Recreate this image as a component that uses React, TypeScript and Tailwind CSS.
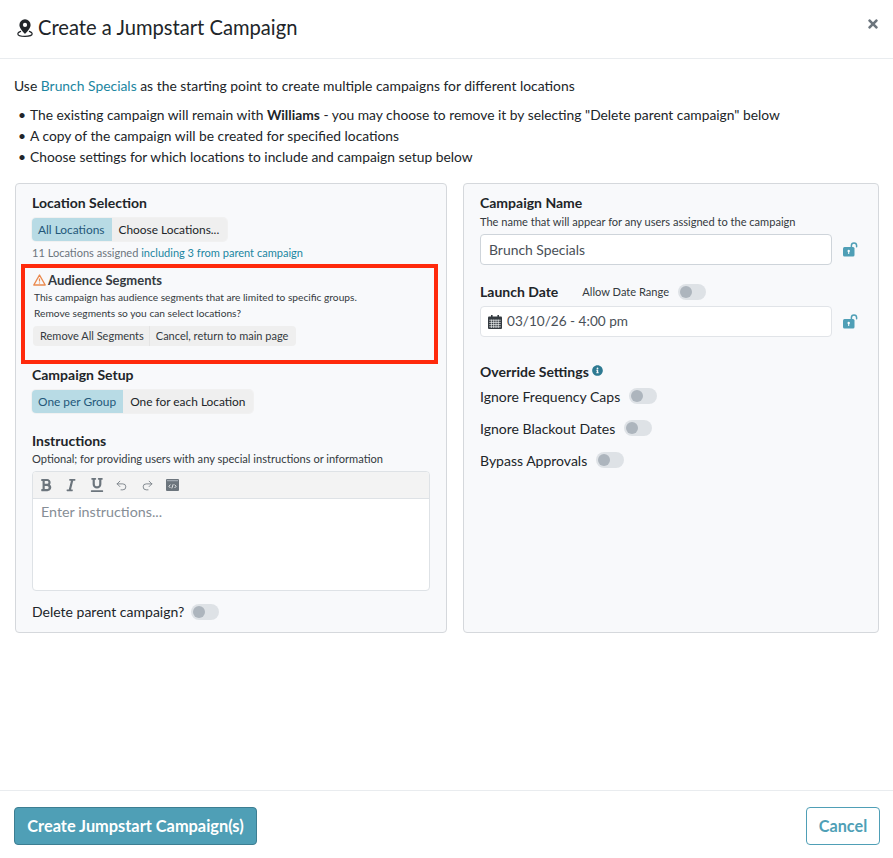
import { Undo2, Redo2 } from "lucide-react"
import { FaBold, FaItalic, FaUnderline, FaTimes, FaInfoCircle } from "react-icons/fa"

const Toggle = () => (
  <span className="inline-flex h-[16px] w-[28px] shrink-0 items-center rounded-full bg-[#dee2e6] pl-[2px]">
    <span className="h-[12px] w-[12px] rounded-full bg-[#adb5bd]" />
  </span>
)

const LockIcon = () => (
  <svg width="15" height="15" viewBox="0 0 15 15" className="shrink-0">
    <path d="M8.4 5.5V3.6a2.6 2.6 0 0 1 5.2 0v1.2" fill="none" stroke="#4f9fb6" strokeWidth="1.5" strokeLinecap="round" />
    <rect x="0" y="5" width="11.5" height="9.6" rx="1.5" fill="#4f9fb6" />
    <circle cx="5.7" cy="9" r="1.2" fill="#fff" />
    <rect x="5.2" y="9.4" width="1" height="2.6" fill="#fff" />
  </svg>
)

const PinIcon = () => (
  <svg width="16" height="18" viewBox="0 0 16 18" className="-mt-[2px] shrink-0">
    <path d="M8 0.3a5.6 5.6 0 0 0-5.6 5.6c0 3.3 3.9 7.2 5.6 8.9 1.7-1.7 5.6-5.6 5.6-8.9A5.6 5.6 0 0 0 8 0.3z" fill="#212529" />
    <circle cx="8" cy="5.9" r="2.1" fill="#fff" />
    <path d="M3.6 12.4C1.9 13 0.8 13.8 0.8 14.8c0 1.5 3.2 2.6 7.2 2.6s7.2-1.1 7.2-2.6c0-1-1.1-1.8-2.8-2.4" fill="none" stroke="#212529" strokeWidth="1.2" strokeLinecap="round" />
  </svg>
)

const WarnIcon = () => (
  <svg width="13" height="12" viewBox="0 0 13 12" className="shrink-0">
    <path d="M6.5 1 12.2 11H0.8z" fill="none" stroke="#ea8a4f" strokeWidth="1.4" strokeLinejoin="round" />
    <path d="M6.5 4.4v3.2M6.5 8.6v1" stroke="#ea8a4f" strokeWidth="1.2" />
  </svg>
)

const CalendarIcon = () => (
  <svg width="14" height="14" viewBox="0 0 14 14" className="shrink-0">
    <rect x="0" y="1.5" width="14" height="12.5" rx="1" fill="#343a40" />
    <rect x="3" y="0" width="1.6" height="3" fill="#343a40" />
    <rect x="9.4" y="0" width="1.6" height="3" fill="#343a40" />
    <path d="M1.2 5.2h11.6M1.2 7.4h11.6M1.2 9.6h11.6M1.2 11.8h11.6M3.4 4.6v8.4M5.7 4.6v8.4M8 4.6v8.4M10.3 4.6v8.4" stroke="#f1f3f5" strokeWidth="0.7" />
  </svg>
)

const CodeIcon = () => (
  <svg width="13" height="12" viewBox="0 0 13 12">
    <rect x="0" y="0" width="13" height="12" rx="1" fill="#6c757d" />
    <rect x="1" y="1.2" width="11" height="1" fill="#adb5bd" />
    <path d="M4.4 5.6 2.9 7.3l1.5 1.7M8.6 5.6l1.5 1.7-1.5 1.7M7.2 5.2 5.8 9.4" fill="none" stroke="#fff" strokeWidth="0.8" />
  </svg>
)

const Heading = ({ children }: { children: React.ReactNode }) => (
  <div className="text-[14px] font-bold leading-[18px] text-[#212529]">{children}</div>
)

export default function App() {
  return (
    <div className="flex h-[858px] w-[893px] flex-col bg-white font-['Lato',sans-serif] text-[#212529]">
      <header className="flex h-[59px] shrink-0 items-center border-b border-[#e9ecef] pl-[17px] pr-[13px]">
        <PinIcon />
        <h1 className="-mt-[4px] ml-[5px] text-[20.16px] font-normal leading-none">Create a Jumpstart Campaign</h1>
        <FaTimes className="ml-auto mb-[11px] text-[#6c757d]" size={14} />
      </header>

      <main className="flex-1 px-[15px] pt-[18px] pr-[14px]">
        <p className="-ml-px text-[13.88px] leading-[18px]">
          Use <span className="text-[#1b86a1]">Brunch Specials</span> as the starting point to create multiple campaigns for different locations
        </p>
        <ul className="mt-[9px] text-[13.82px] leading-[21px]">
          <li className="flex">
            <span className="w-[15px] pl-[3px]">•</span>
            <span>The existing campaign will remain with <b>Williams</b> - you may choose to remove it by selecting "Delete parent campaign" below</span>
          </li>
          <li className="flex">
            <span className="w-[15px] pl-[3px]">•</span>
            <span>A copy of the campaign will be created for specified locations</span>
          </li>
          <li className="flex">
            <span className="w-[15px] pl-[3px]">•</span>
            <span>Choose settings for which locations to include and campaign setup below</span>
          </li>
        </ul>

        <div className="mt-[16px] flex gap-[16px]">
          <section className="h-[450px] w-[432px] rounded border border-[#d5d8dc] bg-[#f8f9fb] px-[16px] pt-[10px]">
            <Heading>Location Selection</Heading>
            <div className="mt-[6px] inline-flex h-[23px] overflow-hidden rounded text-[11.9px] leading-[23px] shadow-[0_0_0_1px_#f1f1f1]">
              <span className="bg-[#b8dbe5] pl-[6px] pr-[8px] text-[#24587a]">All Locations</span>
              <span className="bg-[#efefef] pl-[6px] pr-[8px] text-[#212529]">Choose Locations...</span>
            </div>
            <div className="mt-[4px] text-[11.05px] leading-[15px] text-[#6c757d]">
              11 Locations assigned <span className="text-[#1b86a1]">including 3 from parent campaign</span>
            </div>

            <div className="-ml-[11px] mt-[4px] h-[100px] w-[417px] border-4 border-[#ff2a0c] pl-[8px] pt-[4px]">
              <div className="flex items-center gap-[2px] text-[13px] font-bold leading-[16px] text-[#343a40]">
                <WarnIcon />
                Audience Segments
              </div>
              <p className="mt-px ml-px text-[10.2px] leading-[16px] text-[#343a40]">
                This campaign has audience segments that are limited to specific groups.
                <br />
                Remove segments so you can select locations?
              </p>
              <div className="mt-[5px] inline-flex h-[20px] rounded bg-[#efefef] text-[11px] leading-[20px] text-[#343a40]">
                <span className="border-r border-[#e4e4e4] pl-[7px] pr-[5px]">Remove All Segments</span>
                <span className="pl-[6px] pr-[8px]">Cancel, return to main page</span>
              </div>
            </div>

            <div className="mt-[2px]"><Heading>Campaign Setup</Heading></div>
            <div className="mt-[6px] inline-flex h-[23px] overflow-hidden rounded text-[11.9px] leading-[23px] shadow-[0_0_0_1px_#f1f1f1]">
              <span className="bg-[#b8dbe5] pl-[6px] pr-[7px] text-[#24587a]">One per Group</span>
              <span className="bg-[#efefef] px-[7px] text-[#212529]">One for each Location</span>
            </div>

            <div className="mt-[19px]"><Heading>Instructions</Heading></div>
            <div className="mt-[1px] text-[11.1px] leading-[16px] text-[#343a40]">Optional; for providing users with any special instructions or information</div>
            <div className="mt-[4px] w-[398px] overflow-hidden rounded border border-[#dee2e6] bg-white">
              <div className="flex h-[27px] items-center border-b border-[#dee2e6] bg-[#f3f3f3] pl-[6px] text-[#6c757d]">
                <FaBold size={14} />
                <FaItalic size={14} className="ml-[11px]" />
                <FaUnderline size={14} className="ml-[12px]" />
                <Undo2 size={13} strokeWidth={1.5} className="ml-[11px]" />
                <Redo2 size={13} strokeWidth={1.5} className="ml-[13px]" />
                <span className="ml-[12px] flex"><CodeIcon /></span>
              </div>
              <div className="h-[91px] px-[8px] pt-[3px] text-[14.3px] leading-[20px] text-[#868e96]">Enter instructions...</div>
            </div>
            <div className="mt-[12px] flex items-center gap-[7px] text-[14px] leading-[18px]">
              Delete parent campaign?
              <Toggle />
            </div>
          </section>

          <section className="h-[450px] w-[416px] rounded border border-[#d5d8dc] bg-[#f8f9fb] px-[16px] pt-[10px]">
            <Heading>Campaign Name</Heading>
            <div className="mt-[2px] text-[11.07px] leading-[16px] text-[#343a40]">The name that will appear for any users assigned to the campaign</div>
            <div className="mt-[4px] flex items-center gap-[11px]">
              <div className="h-[31px] w-[352px] rounded border border-[#ced4da] bg-white pl-[8px] text-[13.9px] leading-[29px] text-[#495057]">Brunch Specials</div>
              <LockIcon />
            </div>

            <div className="mt-[18px] flex h-[18px] items-center">
              <Heading>Launch Date</Heading>
              <span className="ml-[24px] text-[11.1px] text-[#343a40]">Allow Date Range</span>
              <span className="ml-[9px] flex"><Toggle /></span>
            </div>
            <div className="mt-[5px] flex items-center gap-[11px]">
              <div className="flex h-[31px] w-[352px] items-center gap-[5px] rounded border border-[#e1e4e8] bg-white pl-[7px] text-[13.6px] text-[#495057]">
                <CalendarIcon />
                03/10/26 - 4:00 pm
              </div>
              <LockIcon />
            </div>

            <div className="mt-[26px] flex items-center gap-[3px]">
              <Heading>Override Settings</Heading>
              <FaInfoCircle size={11} className="mb-[3px] text-[#2e7a92]" />
            </div>
            <div className="mt-[6px] flex h-[18px] items-center gap-[9px] text-[14px]">Ignore Frequency Caps <Toggle /></div>
            <div className="mt-[14px] flex h-[18px] items-center gap-[9px] text-[14px]">Ignore Blackout Dates <Toggle /></div>
            <div className="mt-[14px] flex h-[18px] items-center gap-[9px] text-[14px]">Bypass Approvals <Toggle /></div>
          </section>
        </div>
      </main>

      <footer className="flex h-[68px] shrink-0 items-start justify-between border-t border-[#e9ecef] pl-[14px] pr-[13px] pt-[16px]">
        <button className="h-[38px] w-[243px] rounded border border-[#3d7e92] bg-[#4f9fb6] text-[16.35px] font-bold text-white">Create Jumpstart Campaign(s)</button>
        <button className="h-[38px] w-[74px] rounded border border-[#4f9fb6] bg-white text-[16.2px] font-bold text-[#4f9fb6]">Cancel</button>
      </footer>
    </div>
  )
}
